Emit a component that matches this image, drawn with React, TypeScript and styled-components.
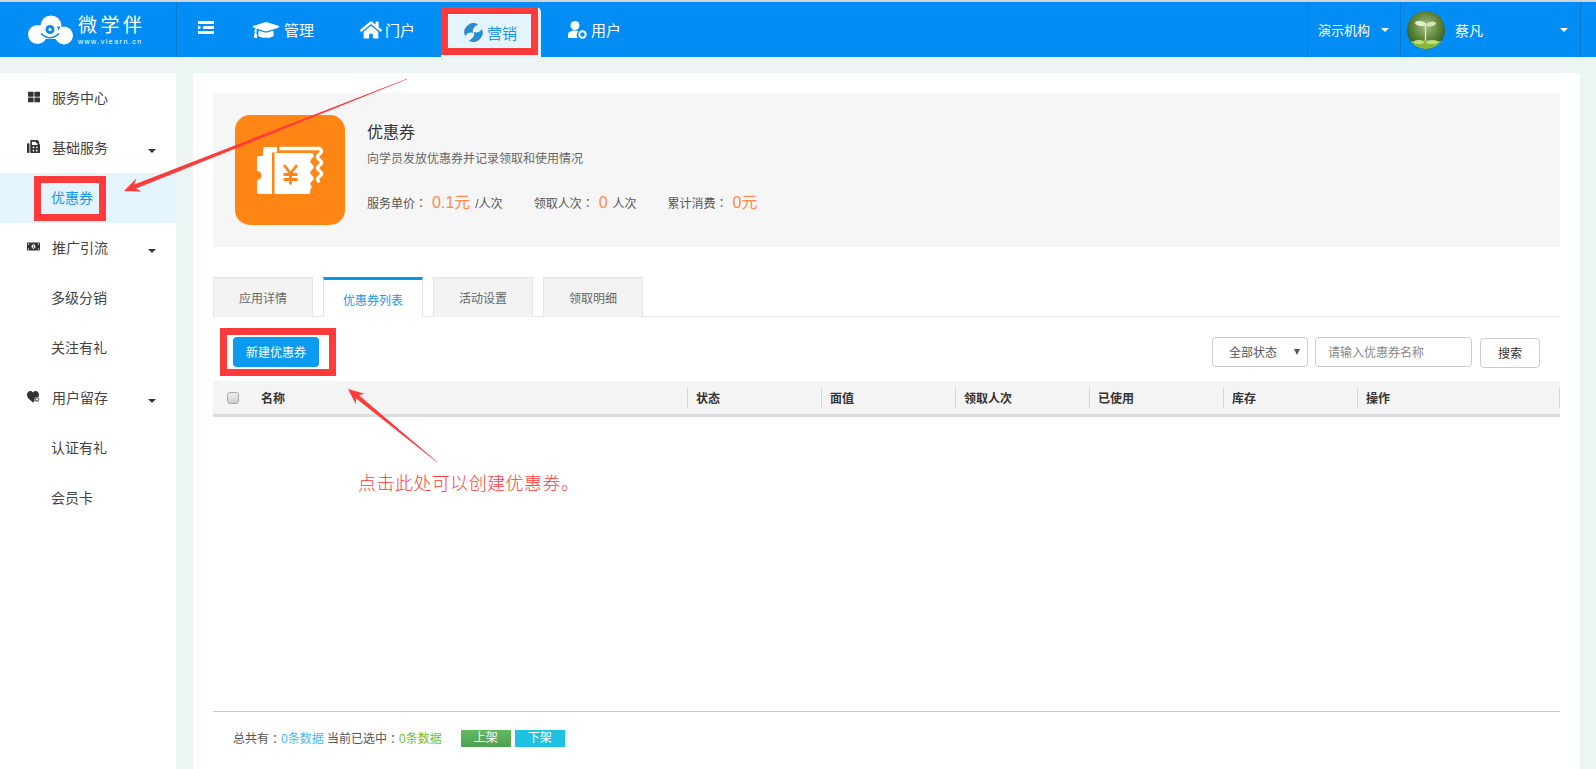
import React from 'react';
import styled, { createGlobalStyle, css } from 'styled-components';
import { FaGraduationCap, FaHome, FaThLarge, FaMoneyBillAlt, FaFax } from 'react-icons/fa';

const FONT = `"Liberation Sans", "Noto Sans CJK SC", sans-serif`;
const RED = '#ff3a3a';

const GlobalStyle = createGlobalStyle`
  html, body {
    margin: 0;
    padding: 0;
    background: #edf5f4;
    font-family: ${FONT};
    overflow: hidden;
  }
  * { box-sizing: border-box; }
`;

const Page = styled.div`
  position: relative;
  width: 1596px;
  height: 769px;
  overflow: hidden;
  display: flex;
  flex-direction: column;
`;

const TopLine = styled.div`
  height: 2px;
  background: #cfd3d6;
`;

const Header = styled.header`
  height: 55px;
  background: #028df5;
  color: #fff;
  display: flex;
  align-items: stretch;
`;

const LogoArea = styled.div`
  width: 177px;
  padding-left: 28px;
  border-right: 1px solid #0a78c8;
  display: flex;
  align-items: center;
  gap: 4px;
`;

const LogoWords = styled.div`
  display: flex;
  flex-direction: column;
  margin-top: 1px;
`;

const LogoName = styled.div`
  font-size: 19px;
  line-height: 22px;
  letter-spacing: 3.5px;
  white-space: nowrap;
`;

const LogoUrl = styled.div`
  font-size: 7px;
  line-height: 9px;
  letter-spacing: 1.5px;
  white-space: nowrap;
`;

const MenuToggle = styled.div`
  width: 53px;
  padding-left: 21px;
  display: flex;
  align-items: center;
  margin-top: -4px;
`;

const NavItem = styled.div<{ $active?: boolean; $shift?: number; $gap?: number }>`
  position: relative;
  display: flex;
  align-items: center;
  gap: ${p => p.$gap ?? 5}px;
  padding: 0 23px;
  margin-left: ${p => p.$shift || 0}px;
  font-size: 15px;
  white-space: nowrap;
  ${p =>
    p.$active &&
    css`
      align-self: flex-end;
      width: 100px;
      height: 50px;
      background: #e3f4fc;
      color: #1a96ea;
      border-radius: 0 5px 0 0;
      &::after {
        content: '';
        position: absolute;
        top: 0;
        left: 0;
        right: 3px;
        bottom: 2px;
        border: 7px solid ${RED};
      }
    `}
`;

const HeaderRight = styled.div`
  margin-left: auto;
  display: flex;
  align-items: stretch;
  margin-right: 15px;
`;

const OrgSwitch = styled.div`
  width: 94px;
  padding-left: 10px;
  border-left: 1px solid #0a78c8;
  border-right: 1px solid #0a78c8;
  display: flex;
  align-items: center;
  gap: 11px;
  font-size: 13px;
  white-space: nowrap;
`;

const UserSwitch = styled.div`
  width: 180px;
  padding: 0 12px 0 6px;
  border-right: 1px solid #0a78c8;
  display: flex;
  align-items: center;
  font-size: 14px;
`;

const UserName = styled.span`
  margin-left: 10px;
`;

const Caret = styled.i<{ $color?: string; $push?: boolean; $drop?: number }>`
  display: block;
  width: 0;
  height: 0;
  border-left: 4px solid transparent;
  border-right: 4px solid transparent;
  border-top: 4px solid ${p => p.$color || '#fff'};
  margin-left: ${p => (p.$push ? 'auto' : '0')};
  margin-top: ${p => p.$drop || 0}px;
`;

const Body = styled.div`
  flex: 1;
  display: flex;
  padding-top: 16px;
  min-height: 0;
`;

const Sidebar = styled.nav`
  width: 176px;
  background: #fff;
  flex: none;
`;

const SideRow = styled.div<{ $active?: boolean; $sub?: boolean }>`
  height: 50px;
  display: flex;
  align-items: center;
  font-size: 14px;
  color: #444;
  padding: 0 20px 3px ${p => (p.$sub ? '51px' : '27px')};
  ${p =>
    p.$active &&
    css`
      background: #e3f4fc;
      color: #1a96ea;
      padding: 0 20px 0 34px;
    `}
`;

const SideIcon = styled.span`
  width: 13px;
  height: 14px;
  margin-right: 12px;
  display: flex;
  align-items: center;
  justify-content: center;
  color: #333;
  font-size: 13px;
`;

const SideBox = styled.div`
  border: 7px solid ${RED};
  padding: 0 6px 2px 10px;
  height: 45px;
  display: flex;
  align-items: center;
`;

const Main = styled.main`
  width: 1387px;
  margin-left: 17px;
  background: #fff;
  padding: 20px 20px 0;
  display: flex;
  flex-direction: column;
`;

const InfoPanel = styled.section`
  height: 154px;
  background: #f6f6f6;
  padding: 22px;
  display: flex;
  gap: 22px;
`;

const AppIcon = styled.div`
  width: 110px;
  height: 110px;
  border-radius: 15px;
  background: #ff8615;
  flex: none;
`;

const InfoText = styled.div`
  display: flex;
  flex-direction: column;
`;

const InfoTitle = styled.h1`
  margin: 7px 0 0;
  font-size: 16px;
  line-height: 22px;
  font-weight: 400;
  color: #333;
`;

const InfoDesc = styled.p`
  margin: 6px 0 0;
  font-size: 12px;
  line-height: 18px;
  color: #666;
`;

const Stats = styled.div`
  margin-top: 21px;
  display: flex;
  align-items: baseline;
  gap: 31px;
  font-size: 12px;
  color: #555;
`;

const Stat = styled.div`
  display: flex;
  align-items: baseline;
  gap: 5px;
  white-space: nowrap;
`;

const StatValue = styled.span`
  font-size: 16px;
  color: #ff8c4d;
`;

// the traditional-Chinese cut centres the full-width colon, as the reference does
const Colon = styled.span`
  font-family: "Noto Sans CJK TC", sans-serif;
`;

const Tabs = styled.div`
  margin-top: 30px;
  height: 40px;
  display: flex;
  gap: 10px;
  border-bottom: 1px solid #e4e4e4;
`;

const Tab = styled.div<{ $active?: boolean }>`
  width: 100px;
  height: 40px;
  display: flex;
  align-items: center;
  justify-content: center;
  font-size: 12px;
  color: #666;
  background: #f3f3f3;
  border: 1px solid #e4e4e4;
  border-bottom: 0;
  ${p =>
    p.$active &&
    css`
      background: #fff;
      color: #1a96ea;
      border-top: 3px solid #0a96e6;
      padding-top: 2px;
    `}
`;

const Toolbar = styled.div`
  height: 64px;
  display: flex;
  justify-content: space-between;
  padding: 11px 20px 0 7px;
`;

const CreateBox = styled.div`
  border: 7px solid ${RED};
  height: 48px;
  padding: 2px 10px 2px 6px;
`;

const PrimaryButton = styled.button`
  width: 86px;
  height: 30px;
  border: 0;
  border-radius: 4px;
  background: #0a9bf0;
  color: #fff;
  font-family: ${FONT};
  font-size: 12px;
  padding: 0 0 2px;
`;

const Filters = styled.div`
  display: flex;
  align-items: flex-start;
  padding-top: 9px;
`;

const SelectWrap = styled.div`
  position: relative;
  width: 96px;
  height: 30px;
  margin-right: 7px;
  &::after {
    content: '';
    position: absolute;
    right: 8px;
    top: 12px;
    border-left: 3px solid transparent;
    border-right: 3px solid transparent;
    border-top: 6px solid #555;
  }
`;

const Select = styled.select`
  appearance: none;
  width: 100%;
  height: 100%;
  padding: 2px 0 0 16px;
  border: 1px solid #ccc;
  border-radius: 4px;
  background: #fff;
  color: #555;
  font-family: ${FONT};
  font-size: 12px;
`;

const SearchInput = styled.input`
  width: 157px;
  height: 30px;
  margin-right: 8px;
  padding: 1px 12px 0;
  border: 1px solid #ccc;
  border-radius: 4px;
  font-family: ${FONT};
  font-size: 12px;
  &::placeholder {
    color: #888;
    opacity: 1;
  }
`;

const SearchButton = styled.button`
  width: 60px;
  height: 30px;
  margin-top: 1px;
  padding: 0 0 2px;
  background: #fff;
  border: 1px solid #ccc;
  border-radius: 4px;
  color: #333;
  font-family: ${FONT};
  font-size: 12px;
`;

const TableArea = styled.div`
  flex: 1;
`;

const TableHead = styled.div`
  height: 36px;
  background: #f4f4f4;
  border-bottom: 3px solid #ddd;
  display: grid;
  grid-template-columns: 474px repeat(5, 134px) 1fr;
  align-items: center;
  font-size: 12px;
  font-weight: 700;
  color: #333;
`;

const NameCell = styled.div`
  display: flex;
  align-items: center;
  padding-left: 14px;
  gap: 22px;
`;

const HeadCell = styled.div<{ $last?: boolean }>`
  height: 21px;
  line-height: 24px;
  padding-left: 8px;
  border-left: 1px solid #d5d5d5;
  border-right: ${p => (p.$last ? '1px solid #d5d5d5' : '0')};
`;

const CheckBox = styled.input`
  appearance: none;
  margin: 0;
  width: 12px;
  height: 12px;
  border: 1px solid #aaa;
  border-radius: 3px;
  background: linear-gradient(#eee, #ccc);
`;

const Footer = styled.footer`
  height: 58px;
  border-top: 1px solid #ccc;
  padding: 18px 0 0 20px;
  display: flex;
  align-items: flex-start;
  font-size: 12px;
  line-height: 18px;
  color: #555;
  white-space: nowrap;
`;

const Count = styled.span<{ $color: string }>`
  color: ${p => p.$color};
`;

const FootButtons = styled.div`
  display: flex;
  gap: 4px;
  margin-left: 19px;
`;

const FootButton = styled.div<{ $bg: string }>`
  width: 50px;
  height: 17px;
  background: ${p => p.$bg};
  color: #fff;
  text-align: center;
  font-size: 12px;
  line-height: 17px;
`;

const NoteText = styled.div`
  position: absolute;
  left: 358px;
  top: 471px;
  font-size: 18px;
  line-height: 26px;
  letter-spacing: 0.45px;
  color: ${RED};
  font-weight: 300;
  white-space: nowrap;
`;

const ArrowLayer = styled.svg`
  position: absolute;
  left: 0;
  top: 0;
  pointer-events: none;
`;

// tapered annotation arrow: thin tail, wider shaft near the head
function arrowPoints(x1: number, y1: number, x2: number, y2: number): string {
  const len = Math.hypot(x2 - x1, y2 - y1);
  const ux = (x2 - x1) / len;
  const uy = (y2 - y1) / len;
  const nx = -uy;
  const ny = ux;
  const at = (along: number, side: number) =>
    `${(x2 - ux * along + nx * side).toFixed(1)},${(y2 - uy * along + ny * side).toFixed(1)}`;
  return [
    at(len, 0.2),
    at(12, 2.2),
    at(16, 7),
    at(0, 0),
    at(16, -7),
    at(12, -2.2),
    at(len, -0.2),
  ].join(' ');
}

function CloudLogo() {
  return (
    <svg width="46" height="30" viewBox="0 0 46 30" fill="#fff">
      <circle cx="9.500" cy="19.500" r="9.500" />
      <circle cx="23" cy="11" r="10.500" />
      <circle cx="36" cy="20.500" r="9" />
      <rect x="10" y="14" width="26" height="10" />
      <circle cx="22" cy="14.500" r="4.500" fill="#028df5" />
      <circle cx="22" cy="14.500" r="1.600" fill="#fff" />
      <path d="M13 18.500Q22 27 31 18.500" fill="none" stroke="#028df5" strokeWidth="1.600" />
      <path d="M29 11.500l3.500 0-2 4z" fill="#028df5" />
    </svg>
  );
}

function ToggleIcon() {
  return (
    <svg width="16" height="13" viewBox="0 0 16 13" fill="#fff">
      <rect x="0" y="0" width="16" height="3" />
      <rect x="5" y="5" width="11" height="3" />
      <rect x="0" y="10" width="16" height="3" />
      <path d="M0 4.500l3.500 2-3.500 2z" />
    </svg>
  );
}

function SwirlIcon() {
  const blade = 'M15 1.500A9.700 9.700 0 0 0 1.200 13.800C3.500 10 7 9.500 9.500 10.500 8.500 7 10.500 3.500 15 1.500z';
  return (
    <svg width="19" height="19" viewBox="0 0 20 20" fill="#2a8ad0">
      <path d={blade} />
      <path d={blade} transform="rotate(180 10 10)" />
    </svg>
  );
}

function UserGearIcon() {
  return (
    <svg width="19" height="18" viewBox="0 0 19 18" fill="#fff">
      <circle cx="7" cy="4.500" r="4.500" />
      <path d="M0 17v-3c0-3 2.500-4.500 7-4.500 1.500 0 2.500.2 3.500.5-1.800 1.500-2.500 4.500-1 7H0z" />
      <circle cx="14.500" cy="13.500" r="3.200" fill="none" stroke="#fff" strokeWidth="2" />
    </svg>
  );
}

function HeartGearIcon() {
  return (
    <svg width="13" height="12" viewBox="0 0 13 12" fill="#333">
      <path d="M6 11.500C2 8.500 0 6.500 0 3.800 0 1.500 1.600 0 3.400 0 4.500 0 5.500.6 6 1.500 6.500.6 7.500 0 8.600 0c1.800 0 3.400 1.500 3.400 3.800 0 2.700-2 4.700-6 7.700z" />
      <circle cx="10" cy="8.500" r="2.600" fill="#fff" />
      <circle cx="10" cy="8.500" r="1.700" fill="none" stroke="#333" strokeWidth="1" />
    </svg>
  );
}

function TicketIcon() {
  return (
    <svg width="110" height="110" viewBox="0 0 110 110">
      <path
        d="M30 32h12v5.500h-5V79H24a2 2 0 0 1-2-2V65a4.500 4.500 0 0 0 0-9V43a2 2 0 0 1 2-2h4v-7a2 2 0 0 1 2-2z"
        fill="#fff"
      />
      <path
        d="M39.500 38H77q3.500 2.800 0 5.600t0 5.600 0 5.600 0 5.600 0 5.600 0 5.600q-2 2-2 7.400H39.500z"
        fill="#fff"
      />
      <path
        d="M44.500 33.500H84.500q4 2.800 0 5.600t0 5.600 0 5.600 0 5.600 0 5.600 0 5.600"
        fill="none"
        stroke="#fff"
        strokeWidth="3.400"
      />
      <path
        d="M49 50l6.500 8.500 6.500-8.500M55.500 58v11.500M48.500 59.500h14M48.500 64.500h14"
        fill="none"
        stroke="#ff8615"
        strokeWidth="2.800"
      />
    </svg>
  );
}

function Avatar() {
  return (
    <svg width="38" height="38" viewBox="0 0 38 38">
      <defs>
        <radialGradient id="leafBg" cx="50%" cy="40%" r="60%">
          <stop offset="0%" stopColor="#a5bd84" />
          <stop offset="60%" stopColor="#5c8438" />
          <stop offset="100%" stopColor="#2f5a1c" />
        </radialGradient>
        <clipPath id="avatarClip">
          <circle cx="19" cy="19" r="19" />
        </clipPath>
      </defs>
      <g clipPath="url(#avatarClip)">
        <rect width="38" height="38" fill="url(#leafBg)" />
        <rect x="0" y="30" width="38" height="8" fill="#8ab83a" />
        <ellipse cx="12" cy="31" rx="5" ry="2" fill="#c4de7a" />
        <ellipse cx="25" cy="31" rx="6" ry="2" fill="#c4de7a" />
        <path d="M18.500 14v16" stroke="#dfe8c0" strokeWidth="1.400" />
        <ellipse cx="13.500" cy="12.500" rx="5.500" ry="2.400" fill="#e4eecb" transform="rotate(8 13.500 12.500)" />
        <ellipse cx="24" cy="13" rx="5" ry="2.200" fill="#d6e4b2" transform="rotate(-10 24 13)" />
      </g>
    </svg>
  );
}

const columns = ['状态', '面值', '领取人次', '已使用', '库存'];

export default function App() {
  return (
    <Page>
      <GlobalStyle />
      <TopLine />
      <Header>
        <LogoArea>
          <CloudLogo />
          <LogoWords>
            <LogoName>微学伴</LogoName>
            <LogoUrl>www.vlearn.cn</LogoUrl>
          </LogoWords>
        </LogoArea>
        <MenuToggle>
          <ToggleIcon />
        </MenuToggle>
        <NavItem>
          <FaGraduationCap size={26} />
          管理
        </NavItem>
        <NavItem $gap={3}>
          <FaHome size={22} />
          门户
        </NavItem>
        <NavItem $active $shift={3} $gap={4}>
          <SwirlIcon />
          营销
        </NavItem>
        <NavItem $shift={4} $gap={4}>
          <UserGearIcon />
          用户
        </NavItem>
        <HeaderRight>
          <OrgSwitch>
            演示机构
            <Caret />
          </OrgSwitch>
          <UserSwitch>
            <Avatar />
            <UserName>蔡凡</UserName>
            <Caret $push />
          </UserSwitch>
        </HeaderRight>
      </Header>
      <Body>
        <Sidebar>
          <SideRow>
            <SideIcon><FaThLarge size={12} /></SideIcon>
            服务中心
          </SideRow>
          <SideRow>
            <SideIcon><FaFax size={13} /></SideIcon>
            基础服务
            <Caret $color="#333" $push $drop={9} />
          </SideRow>
          <SideRow $active>
            <SideBox>优惠券</SideBox>
          </SideRow>
          <SideRow>
            <SideIcon><FaMoneyBillAlt size={15} /></SideIcon>
            推广引流
            <Caret $color="#333" $push $drop={9} />
          </SideRow>
          <SideRow $sub>多级分销</SideRow>
          <SideRow $sub>关注有礼</SideRow>
          <SideRow>
            <SideIcon><HeartGearIcon /></SideIcon>
            用户留存
            <Caret $color="#333" $push $drop={9} />
          </SideRow>
          <SideRow $sub>认证有礼</SideRow>
          <SideRow $sub>会员卡</SideRow>
        </Sidebar>
        <Main>
          <InfoPanel>
            <AppIcon>
              <TicketIcon />
            </AppIcon>
            <InfoText>
              <InfoTitle>优惠券</InfoTitle>
              <InfoDesc>向学员发放优惠券并记录领取和使用情况</InfoDesc>
              <Stats>
                <Stat>
                  <span>服务单价<Colon>：</Colon></span>
                  <StatValue>0.1元</StatValue>/人次
                </Stat>
                <Stat>
                  <span>领取人次<Colon>：</Colon></span>
                  <StatValue>0</StatValue>人次
                </Stat>
                <Stat>
                  <span>累计消费<Colon>：</Colon></span>
                  <StatValue>0元</StatValue>
                </Stat>
              </Stats>
            </InfoText>
          </InfoPanel>
          <Tabs>
            <Tab>应用详情</Tab>
            <Tab $active>优惠券列表</Tab>
            <Tab>活动设置</Tab>
            <Tab>领取明细</Tab>
          </Tabs>
          <Toolbar>
            <CreateBox>
              <PrimaryButton>新建优惠券</PrimaryButton>
            </CreateBox>
            <Filters>
              <SelectWrap>
                <Select defaultValue="all">
                  <option value="all">全部状态</option>
                </Select>
              </SelectWrap>
              <SearchInput placeholder="请输入优惠券名称" />
              <SearchButton>搜索</SearchButton>
            </Filters>
          </Toolbar>
          <TableArea>
            <TableHead>
              <NameCell>
                <CheckBox type="checkbox" />
                名称
              </NameCell>
              {columns.map(c => (
                <HeadCell key={c}>{c}</HeadCell>
              ))}
              <HeadCell $last>操作</HeadCell>
            </TableHead>
          </TableArea>
          <Footer>
            总共有<Colon>：</Colon><Count $color="#45b6ff">0条数据</Count>&nbsp;当前已选中<Colon>：</Colon>
            <Count $color="#6fc21e">0条数据</Count>
            <FootButtons>
              <FootButton $bg="linear-gradient(#62bb62, #4fa04f)">上架</FootButton>
              <FootButton $bg="#1ec3e3">下架</FootButton>
            </FootButtons>
          </Footer>
        </Main>
      </Body>
      <NoteText>点击此处可以创建优惠券。</NoteText>
      <ArrowLayer width="1596" height="769">
        <polygon points={arrowPoints(407, 79, 124, 191)} fill={RED} />
        <polygon points={arrowPoints(437, 462, 348, 389)} fill={RED} />
      </ArrowLayer>
    </Page>
  );
}
